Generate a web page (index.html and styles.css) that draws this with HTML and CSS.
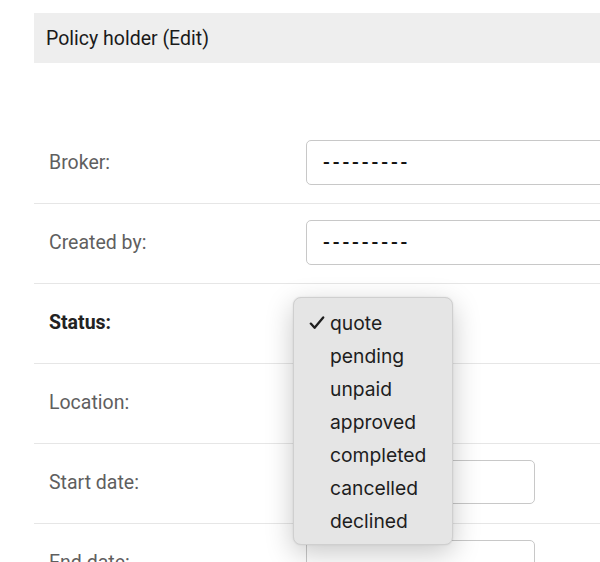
FILE: index.html
```html
<!DOCTYPE html>
<html>
<head>
<meta charset="utf-8">
<link rel="stylesheet" href="styles.css">
</head>
<body>
<div class="page">
  <div class="panel-head">Policy holder (Edit)</div>
  <div class="form">
    <div class="row">
      <div class="label">Broker:</div>
      <div class="field"><div class="input full">---------</div></div>
    </div>
    <div class="row">
      <div class="label">Created by:</div>
      <div class="field"><div class="input full">---------</div></div>
    </div>
    <div class="row">
      <div class="label strong">Status:</div>
      <div class="field"><div class="input small"></div></div>
    </div>
    <div class="row">
      <div class="label">Location:</div>
      <div class="field"></div>
    </div>
    <div class="row">
      <div class="label">Start date:</div>
      <div class="field"><div class="input date"></div></div>
    </div>
    <div class="row">
      <div class="label">End date:</div>
      <div class="field"><div class="input date"></div></div>
    </div>
  </div>
  <ul class="menu">
    <li class="checked"><svg class="check" width="16" height="14" viewBox="0 0 16 14"><path d="M1.8 7.6 L5.6 11.8 L14.2 1.4" fill="none" stroke="#1e1e1e" stroke-width="2.3" stroke-linecap="round" stroke-linejoin="round"/></svg>quote</li>
    <li>pending</li>
    <li>unpaid</li>
    <li>approved</li>
    <li>completed</li>
    <li>cancelled</li>
    <li>declined</li>
  </ul>
</div>
</body>
</html>
```
FILE: styles.css
```css
html, body {
  margin: 0;
  padding: 0;
  background: #fff;
  overflow: hidden;
}
body {
  font-family: Roboto, "Liberation Sans", sans-serif;
  width: 600px;
  height: 562px;
}
.page {
  position: relative;
  height: 562px;
  overflow: hidden;
  padding: 13px 0 0 34px;
  box-sizing: border-box;
}
.panel-head {
  height: 50px;
  background: #eeeeee;
  display: flex;
  align-items: center;
  padding-left: 12px;
  font-size: 19.5px;
  color: #1a1a1a;
}
.form {
  margin-top: 61px;
}
.row {
  height: 80px;
  padding-bottom: 3px;
  border-bottom: 1px solid #e6e6e6;
  box-sizing: border-box;
  display: flex;
  align-items: center;
}
.label {
  width: 257px;
  padding-left: 15px;
  font-size: 19.5px;
  color: #5f5f5f;
  flex: none;
}
.label.strong {
  font-weight: 700;
  color: #222;
}
.field {
  flex: 1;
  display: flex;
}
.input {
  height: 45px;
  box-sizing: border-box;
  border: 1px solid #c8c8c8;
  border-radius: 5px;
  display: flex;
  align-items: center;
  padding-left: 16px;
  font-size: 20px;
  color: #111;
  background: #fff;
}
.input.full {
  width: 320px;
  letter-spacing: 2.9px;
  font-weight: 500;
}
.input.small {
  width: 130px;
}
.input.date {
  width: 229px;
  height: 44px;
}
.menu {
  position: absolute;
  left: 293px;
  top: 297px;
  width: 160px;
  height: 248px;
  box-sizing: border-box;
  margin: 0;
  padding: 9px 0 0 0;
  list-style: none;
  background: #e5e5e5;
  border: 1px solid #cfcfcf;
  border-radius: 8px;
  box-shadow: 0 8px 28px rgba(0, 0, 0, 0.22), 0 0 2px rgba(0, 0, 0, 0.1);
  font-family: Inter, "Noto Sans", sans-serif;
  font-size: 19.3px;
  color: #1e1e1e;
}
.menu li {
  height: 33px;
  line-height: 33px;
  padding-left: 36px;
  position: relative;
}
.check {
  position: absolute;
  left: 15px;
  top: 9px;
}
```
